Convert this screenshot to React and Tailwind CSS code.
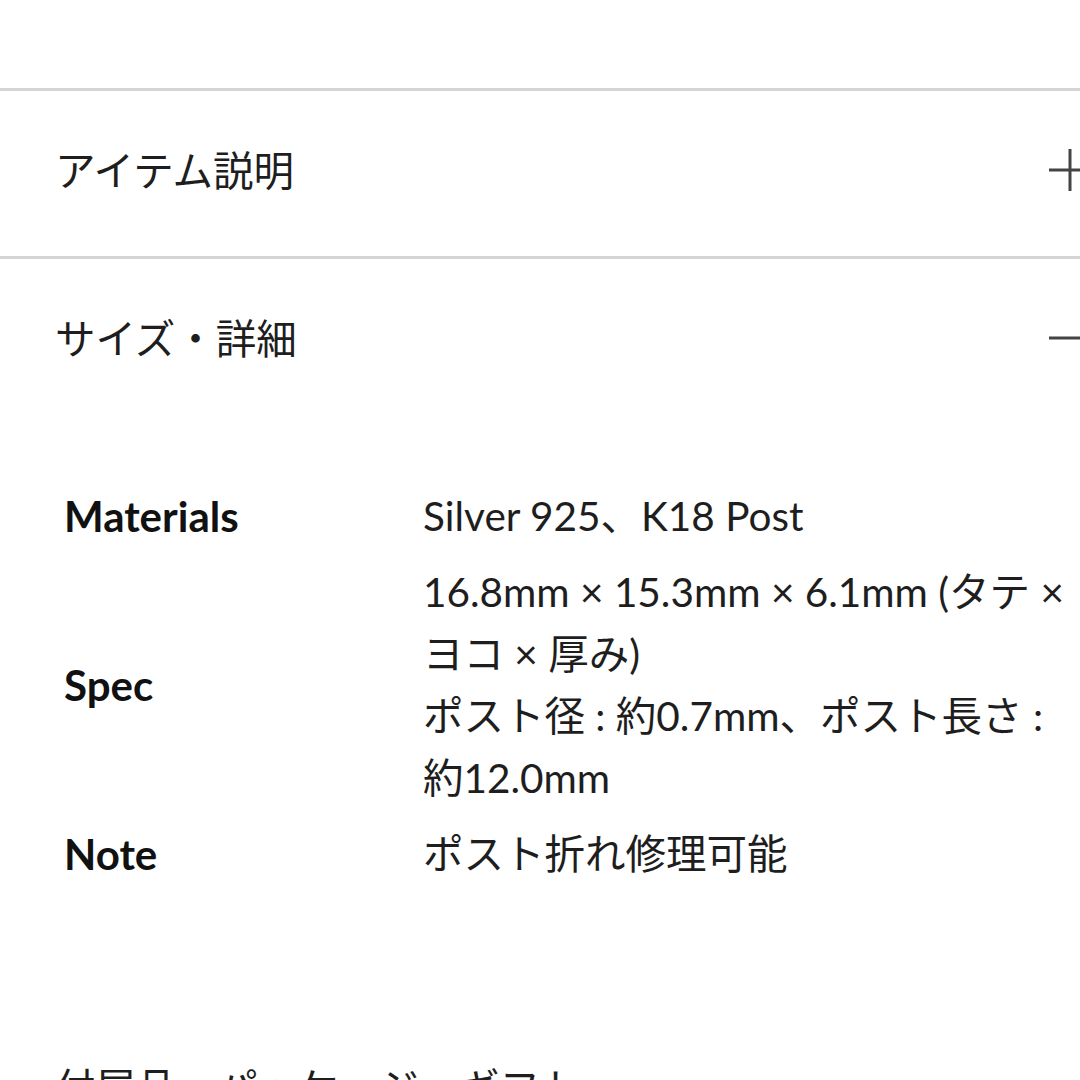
import React from "react";

const jp = { fontFamily: 'Lato, "Noto Sans CJK JP", sans-serif' };

function Plus() {
  return (
    <svg width="42" height="42" viewBox="0 0 42 42" className="shrink-0">
      <path d="M0 21H42M21 0V42" stroke="#444" strokeWidth="3" fill="none" />
    </svg>
  );
}

function Minus() {
  return (
    <svg width="42" height="42" viewBox="0 0 42 42" className="shrink-0">
      <path d="M0 21H42" stroke="#444" strokeWidth="3" fill="none" />
    </svg>
  );
}

function Header({ title, icon }) {
  return (
    <div className="flex h-[165px] w-full items-center justify-between pb-[8px] pl-[55px]">
      <span
        className="text-[40.5px] leading-none text-[#1e1e1e]"
        style={{ fontFamily: '"Noto Sans CJK JP", sans-serif' }}
      >
        {title}
      </span>
      {icon === "minus" ? <Minus /> : icon === "plus" ? <Plus /> : null}
    </div>
  );
}

const rows = [
  { label: "Materials", value: ["Silver 925、K18 Post"] },
  {
    label: "Spec",
    value: [
      "16.8mm × 15.3mm × 6.1mm (タテ × ヨコ × 厚み)",
      "ポスト径 : 約0.7mm、ポスト長さ : 約12.0mm",
    ],
  },
  { label: "Note", value: ["ポスト折れ修理可能"] },
];

export default function App() {
  return (
    <div className="h-[1080px] w-[1080px] overflow-hidden bg-white" style={jp}>
      <div className="w-[1091px]">
        <div className="h-[88px]" />
        <div className="border-t-[3px] border-[#d4d4d4]">
          <Header title="アイテム説明" icon="plus" />
        </div>
        <div className="border-t-[3px] border-[#d4d4d4]">
          <Header title="サイズ・詳細" icon="minus" />
          <div className="pb-[116px] pl-[64px] pr-[16px] pt-[54px]">
            <div className="grid grid-cols-[359px_1fr]">
              {rows.map((r) => (
                <React.Fragment key={r.label}>
                  <div className="flex items-center py-[7px] text-[42px] font-bold leading-[62px] text-[#111]">
                    {r.label}
                  </div>
                  <div className="py-[7px] text-[40.5px] leading-[62px] text-[#1e1e1e]">
                    {r.value.map((v, i) => (
                      <div key={i}>{v}</div>
                    ))}
                  </div>
                </React.Fragment>
              ))}
            </div>
          </div>
          <Header title="付属品・パッケージ・ギフト" />
        </div>
      </div>
    </div>
  );
}
